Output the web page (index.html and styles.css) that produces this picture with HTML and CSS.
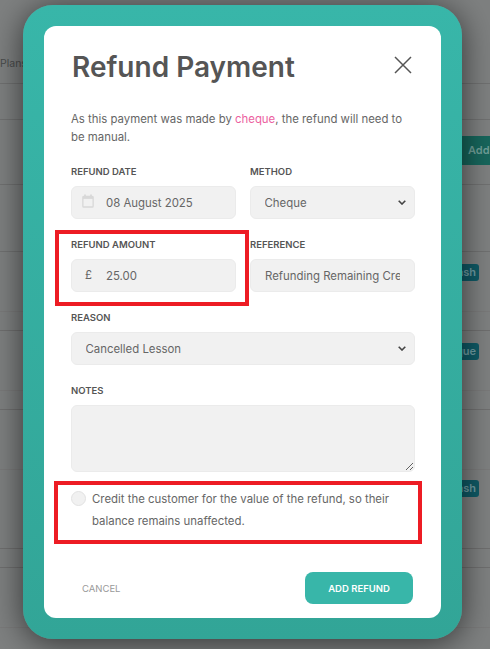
FILE: index.html
```html
<!DOCTYPE html>
<html lang="en">
<head>
    <meta charset="UTF-8">
    <meta name="viewport" content="width=device-width, initial-scale=1.0">
    <title>Refund Payment</title>
    <link rel="stylesheet" href="styles.css">
</head>
<body>
    <div class="page">
        <div class="row row-tabs"><span class="tab">Plans</span></div>
        <div class="row row-gap"></div>
        <div class="row row-add"><span class="add-btn">Add</span></div>
        <div class="row row-head"></div>
        <div class="row row-a"><span class="badge">Cash</span></div>
        <div class="row row-b"></div>
        <div class="row row-a"><span class="badge">Cheque</span></div>
        <div class="row row-b"></div>
        <div class="row row-a row-short"></div>
        <div class="row row-b row-tall"><span class="badge">Cash</span></div>
        <div class="row row-b"></div>
        <div class="row row-a row-last"></div>
    </div>

    <div class="modal">
        <div class="card">
            <div class="card-head">
                <h1>Refund Payment</h1>
                <button class="close" aria-label="Close">
                    <svg width="18" height="18" viewBox="0 0 18 18"><path d="M1 1 L17 17 M17 1 L1 17" stroke="#555" stroke-width="1.5" fill="none"/></svg>
                </button>
            </div>

            <p class="intro">As this payment was made by <span class="pink">cheque</span>, the refund will need to be manual.</p>

            <div class="form">
                <div class="field">
                    <label>Refund Date</label>
                    <div class="input-wrap">
                        <svg class="cal" width="12" height="14" viewBox="0 0 14 16"><path d="M3.5 0.5 V3 M10.5 0.5 V3" stroke="#d8d8d8" stroke-width="2"/><rect x="1" y="2.5" width="12" height="12.5" rx="1" fill="none" stroke="#d8d8d8" stroke-width="1.5"/><rect x="1" y="2.5" width="12" height="3" fill="#d8d8d8"/></svg>
                        <input type="text" value="08 August 2025">
                    </div>
                </div>
                <div class="field">
                    <label>Method</label>
                    <select><option>Cheque</option></select>
                </div>
                <div class="field">
                    <label>Refund Amount</label>
                    <div class="input-wrap">
                        <span class="pound">£</span>
                        <input type="text" value="25.00">
                    </div>
                </div>
                <div class="field">
                    <label>Reference</label>
                    <input class="plain" type="text" value="Refunding Remaining Credit">
                </div>
                <div class="field wide">
                    <label>Reason</label>
                    <select><option>Cancelled Lesson</option></select>
                </div>
                <div class="field wide">
                    <label>Notes</label>
                    <textarea></textarea>
                </div>
            </div>

            <div class="credit">
                <span class="radio"></span>
                <p>Credit the customer for the value of the refund, so their balance remains unaffected.</p>
            </div>

            <div class="actions">
                <button class="cancel">Cancel</button>
                <button class="submit">Add Refund</button>
            </div>
        </div>
    </div>

    <div class="mark mark-amount"></div>
    <div class="mark mark-credit"></div>
</body>
</html>
```

FILE: styles.css
```css
* {
    box-sizing: border-box;
}
html, body {
    margin: 0;
    height: 649px;
    overflow: hidden;
}
body {
    font-family: Inter, "Liberation Sans", sans-serif;
    color: #666;
    background-color: #7e8080;
    position: relative;
}

/* page behind the modal */
.row {
    display: flex;
    align-items: flex-start;
    justify-content: space-between;
    border-bottom: 1px solid #707171;
}
.row-tabs { height: 84px; padding-top: 57px; }
.row-gap { height: 36px; }
.row-add { height: 65px; padding-top: 16px; justify-content: flex-end; }
.row-head { height: 67px; }
.row-a { height: 60px; padding-top: 12px; justify-content: flex-end; border-bottom-color: #7a7a7a; }
.row-b { height: 19px; border-bottom-color: #6f6f6f; }
.row-short { height: 60px; }
.row-tall { height: 79px; padding-top: 10px; justify-content: flex-end; }
.row-last { height: 60px; }
.tab {
    font-size: 10.5px;
    color: #4a4c4c;
}
.add-btn {
    width: 60px;
    height: 29px;
    padding: 7px 0 0 38px;
    background-color: #17665c;
    color: #6f9f98;
    font-size: 11px;
    font-weight: 600;
    white-space: nowrap;
    overflow: hidden;
}
.badge {
    height: 17px;
    margin-right: 11px;
    padding: 0 3px;
    background-color: #0f5a66;
    color: #6f9ea5;
    font-size: 11px;
    font-weight: 600;
    line-height: 17px;
    border-radius: 3px;
}

/* modal */
.modal {
    position: absolute;
    left: 23px;
    top: 5px;
    width: 439px;
    height: 634px;
    padding: 21px;
    border-radius: 30px;
    background: linear-gradient(#38b6a9, #32a597);
    box-shadow: 0 4px 32px rgba(0, 0, 0, 0.6);
}
.card {
    height: 592px;
    padding: 24px 26px 14px 27px;
    background-color: #fff;
    border-radius: 12px;
}
.card-head {
    display: flex;
    justify-content: space-between;
    align-items: flex-start;
    padding-left: 1px;
}
h1 {
    margin: 0;
    font-size: 28px;
    line-height: 35px;
    font-weight: 600;
    color: #555;
}
.close {
    width: 18px;
    height: 18px;
    margin: 6px 3px 0 0;
    padding: 0;
    border: 0;
    background: none;
}
.intro {
    margin: 25px 0 0;
    font-size: 11.4px;
    line-height: 18px;
}
.pink {
    color: #ec5f9f;
}
.form {
    display: grid;
    grid-template-columns: 165px 165px;
    column-gap: 14px;
    row-gap: 20px;
    margin-top: 20px;
}
.wide {
    grid-column: 1 / 3;
}
label {
    display: block;
    margin-bottom: 8px;
    font-size: 9.5px;
    line-height: 12px;
    font-weight: 600;
    color: #555;
    text-transform: uppercase;
}
input, select, textarea {
    display: block;
    width: 100%;
    height: 33px;
    border: 1px solid #ebebeb;
    border-radius: 6px;
    background-color: #f1f1f1;
    font-family: inherit;
    font-size: 11.4px;
    color: #666;
}
input {
    outline: 0;
}
select {
    padding-left: 13.5px;
    appearance: none;
    background-image: url("data:image/svg+xml,%3Csvg xmlns='http://www.w3.org/2000/svg' width='8' height='5' viewBox='0 0 8 5'%3E%3Cpath d='M0.7 0.7 L4 4 L7.3 0.7' stroke='%23444' stroke-width='1.6' fill='none'/%3E%3C/svg%3E");
    background-repeat: no-repeat;
    background-position: right 8px center;
}
.plain {
    padding: 0 14px;
}
textarea {
    height: 67px;
}
.input-wrap {
    position: relative;
}
.input-wrap input {
    padding-left: 34px;
}
.cal {
    position: absolute;
    left: 11px;
    top: 8px;
}
.pound {
    position: absolute;
    left: 14px;
    top: 9px;
    font-size: 11.4px;
}
.credit {
    display: flex;
    gap: 6px;
    margin-top: 16px;
}
.radio {
    flex: none;
    width: 15px;
    height: 15px;
    margin-top: 3px;
    border: 1px solid #e2e2e2;
    border-radius: 50%;
    background-color: #f1f1f1;
}
.credit p {
    margin: 0;
    font-size: 11.4px;
    line-height: 22px;
}
.actions {
    display: flex;
    justify-content: space-between;
    align-items: center;
    margin-top: 40px;
}
.actions button {
    border: 0;
    font-family: inherit;
    text-transform: uppercase;
}
.cancel {
    margin-left: 11px;
    padding: 0;
    background: none;
    font-size: 9.5px;
    color: #999;
}
.submit {
    width: 108px;
    height: 32px;
    margin-right: 2px;
    border-radius: 8px;
    background-color: #38b6a9;
    color: #fff;
    font-size: 9.5px;
    font-weight: 600;
}

/* red annotation boxes */
.mark {
    position: absolute;
    border: 4px solid #ed1c24;
}
.mark-amount {
    left: 55px;
    top: 230px;
    width: 194px;
    height: 76px;
}
.mark-credit {
    left: 54px;
    top: 481px;
    width: 368px;
    height: 63px;
}
```
